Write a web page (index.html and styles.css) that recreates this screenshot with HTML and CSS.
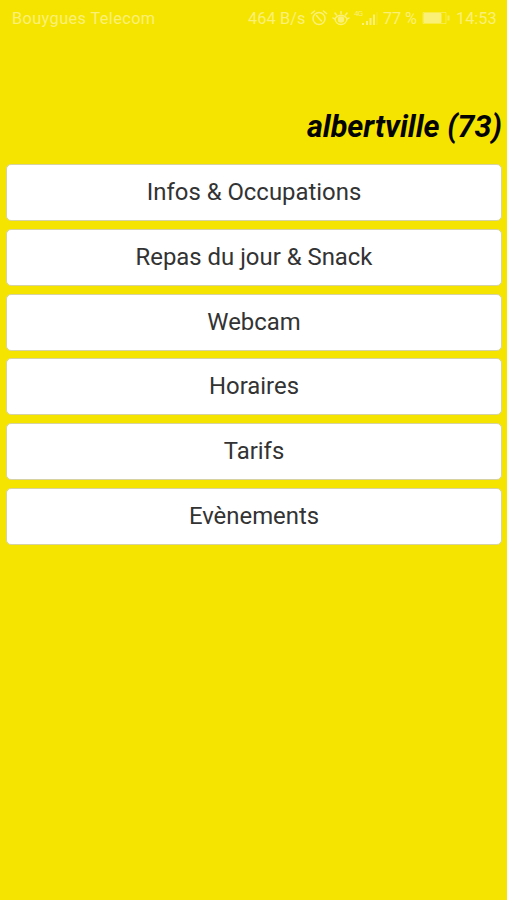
FILE: index.html
```html
<!DOCTYPE html>
<html lang="fr">
<head>
<meta charset="utf-8">
<title>albertville (73)</title>
<link rel="stylesheet" href="styles.css">
</head>
<body>
<header class="status">
  <span class="carrier">Bouygues Telecom</span>
  <span class="speed">464 B/s</span>
  <svg class="alarm" width="18" height="18" viewBox="0 0 18 18" fill="none" stroke="currentColor" stroke-width="1.5" stroke-linecap="round"><circle cx="9" cy="9.5" r="6"/><path d="M1.500 4.500 4.500 2M16.500 4.500 13.500 2M6.500 6.500 9 9.500l2.500 2.500"/></svg>
  <svg class="eye" width="18" height="18" viewBox="0 0 18 18" fill="none" stroke="currentColor" stroke-width="1.5" stroke-linecap="round"><path d="M2.500 10Q9 2.500 15.500 10M3 9.500C3.500 17.500 14.500 17.500 15 9.500M9 4.500V2.500M4.500 6 3 4M13.500 6 15 4M2.500 10 1 9M15.500 10 17 9"/><circle cx="9" cy="10.500" r="2.500" fill="currentColor"/></svg>
  <span class="network">4G</span>
  <svg class="signal" width="16" height="16" viewBox="0 0 16 16" fill="currentColor"><path d="M0 13h2v2H0zM4 11h2v4H4zM7.500 8h2v7h-2zM11 4.500h2V15h-2z"/><path d="M14.500 2h1v13h-1z" opacity=".4"/></svg>
  <span class="percent">77 %</span>
  <svg class="battery" width="28" height="14" viewBox="0 0 28 14" fill="none" stroke="currentColor"><path d="M1 1.500h23v11H1z" opacity=".6"/><path d="M2 2.500h17v9H2z" fill="currentColor"/><path d="M26.500 4.500v5" stroke-width="2" opacity=".7"/></svg>
  <span class="time">14:53</span>
</header>
<main>
  <h1>albertville (73)</h1>
  <nav class="menu">
    <button>Infos &amp; Occupations</button>
    <button>Repas du jour &amp; Snack</button>
    <button>Webcam</button>
    <button>Horaires</button>
    <button>Tarifs</button>
    <button>Evènements</button>
  </nav>
</main>
</body>
</html>
```
FILE: styles.css
```css
* { box-sizing: border-box; }
body {
  margin: 0;
  min-height: 900px;
  background: #f5e400;
  font-family: Roboto, sans-serif;
}
.status {
  display: flex;
  align-items: center;
  height: 36px;
  padding: 0 11px 0 12px;
  color: #faf078;
  font-size: 16.3px;
  line-height: 20px;
  white-space: nowrap;
}
.status span { padding-top: 1px; }
.status svg { flex: none; }
.carrier { width: 236px; letter-spacing: 0.4px; }
.speed { width: 62px; letter-spacing: 0.1px; }
.alarm { margin-right: 4px; }
.eye { margin-right: 4px; }
.network { width: 8px; margin-top: -9px; font-size: 8px; line-height: 8px; letter-spacing: -0.8px; }
.signal { margin-right: 5px; }
.percent { width: 39px; letter-spacing: -0.1px; }
.battery { margin-right: 6px; }
.time { width: 40px; }
h1 {
  height: 128px;
  margin: 0;
  padding: 73px 5px 0 0;
  color: #050500;
  font-size: 30.6px;
  font-style: italic;
  font-weight: 700;
  line-height: 36px;
  text-align: right;
}
.menu {
  display: grid;
  gap: 7.8px;
  padding: 0 5px 0 6px;
}
.menu button {
  height: 57px;
  padding: 0 0 1px;
  border: 1px solid #d6d2a2;
  border-radius: 5px;
  background: #fff;
  color: #333;
  font: 400 23.9px/30px Roboto, sans-serif;
}
```
